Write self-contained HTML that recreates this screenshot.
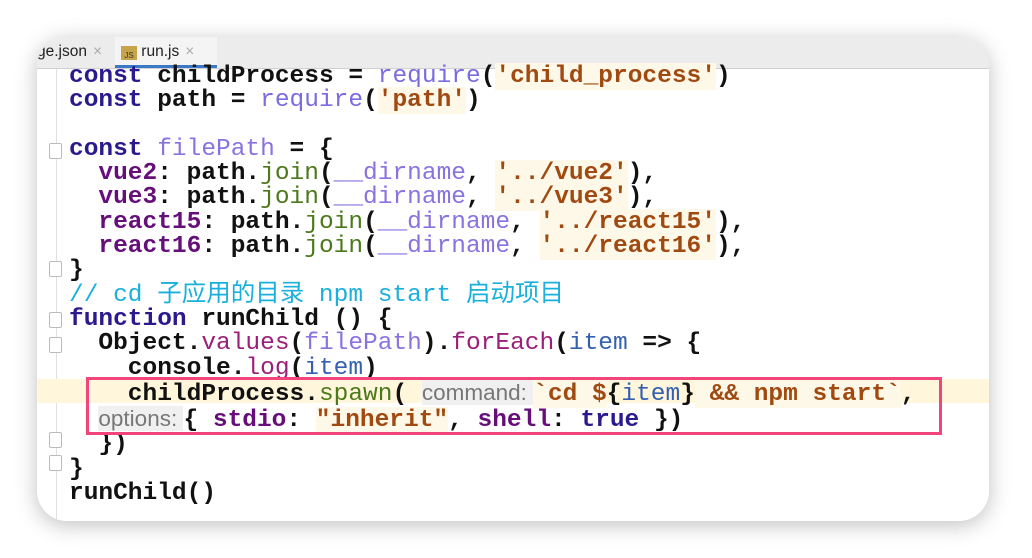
<!DOCTYPE html>
<html><head><meta charset="utf-8"><style>
body{margin:0;width:1032px;height:558px;background:#fff;overflow:hidden;position:relative;font-family:"Liberation Sans",sans-serif}
.card{position:absolute;left:37px;top:37px;width:952px;height:484px;background:#fff;border-radius:30px;box-shadow:0 4px 22px rgba(0,0,0,.25);overflow:hidden}
.tabs{position:absolute;left:0;top:0;width:100%;height:31px;background:#ececec;border-bottom:1px solid #d0d0d0}
.tab{position:absolute;top:6px;font-size:15.5px;color:#222}
.x{color:#aaa;margin-left:6px}
.act{position:absolute;left:78px;top:0;width:102px;height:31px;border-bottom:3px solid #3a78c8;box-sizing:border-box;background:#f4f4f4}
.gut{position:absolute;left:19px;top:32px;width:1px;height:452px;background:#e0e0e0}
.hl{position:absolute;left:0;top:342px;width:100%;height:24px;background:#fff6dc}
pre{position:absolute;left:32px;top:28px;margin:0;font-family:"Liberation Mono","Noto Sans CJK SC",monospace;font-size:24.5px;line-height:24.3px;font-weight:bold;color:#111}
.k{color:#2a1a8e}.p{color:#660e7a}.r{color:#7b6be0;font-weight:normal}.s{color:#a04a12;background:#fdf8e8}.g{color:#4c7a1a;font-weight:normal}.d{color:#8a72e0;font-weight:normal}.c{color:#1ab0dc;font-weight:normal}.m{color:#9b1f7a;font-weight:normal}.b{color:#3560b0;font-weight:normal}.h{font-family:"Liberation Sans",sans-serif;font-weight:normal;color:#777;font-size:22.5px;background:#f0f0f0}
.box{position:absolute;left:86px;top:377px;width:850px;height:52px;border:3px solid #f2457c}
.fold{position:absolute;left:12px;width:11px;height:14px;border:1px solid #bbb;background:#fff;border-radius:2px}
</style></head><body>
<div class="card">
<div class="tabs">
<div class="tab" style="left:0">ge.json<span class="x">×</span></div>
<div class="act"></div>
<div class="tab" style="left:84px"><span style="display:inline-block;width:16px;height:14px;background:#c7a44a;font-size:8px;color:#333;vertical-align:-2px;text-align:center;line-height:20px">JS</span> run.js<span class="x">×</span></div>
</div>
<div class="gut"></div>
<div class="hl"></div>
<div class="fold" style="top:106px"></div>
<div class="fold" style="top:224px"></div>
<div class="fold" style="top:275px"></div>
<div class="fold" style="top:300px"></div>
<div class="fold" style="top:395px"></div>
<div class="fold" style="top:418px"></div>
<pre><span class="k">const</span> childProcess = <span class="r">require</span>(<span class="s">'child_process'</span>)
<span class="k">const</span> path = <span class="r">require</span>(<span class="s">'path'</span>)

<span class="k">const</span> <span class="d">filePath</span> = {
  <span class="p">vue2</span>: path.<span class="g">join</span>(<span class="d">__dirname</span>, <span class="s">'../vue2'</span>),
  <span class="p">vue3</span>: path.<span class="g">join</span>(<span class="d">__dirname</span>, <span class="s">'../vue3'</span>),
  <span class="p">react15</span>: path.<span class="g">join</span>(<span class="d">__dirname</span>, <span class="s">'../react15'</span>),
  <span class="p">react16</span>: path.<span class="g">join</span>(<span class="d">__dirname</span>, <span class="s">'../react16'</span>),
}
<span class="c">// cd 子应用的目录 npm start 启动项目</span>
<span class="k">function</span> runChild () {
  Object.<span class="m">values</span>(<span class="d">filePath</span>).<span class="m">forEach</span>(<span class="b">item</span> =&gt; {
    console.<span class="m">log</span>(<span class="b">item</span>)
    childProcess.<span class="g">spawn</span>( <span class="h">command: </span><span class="s">`cd $</span>{<span class="b">item</span>}<span class="s"> &amp;&amp; npm start`</span>,
  <span class="h">options: </span>{ <span class="p">stdio</span>: <span class="s">"inherit"</span>, <span class="p">shell</span>: <span class="k">true</span> })
  })
}
runChild()</pre>
</div>
<div class="box"></div>
</body></html>
